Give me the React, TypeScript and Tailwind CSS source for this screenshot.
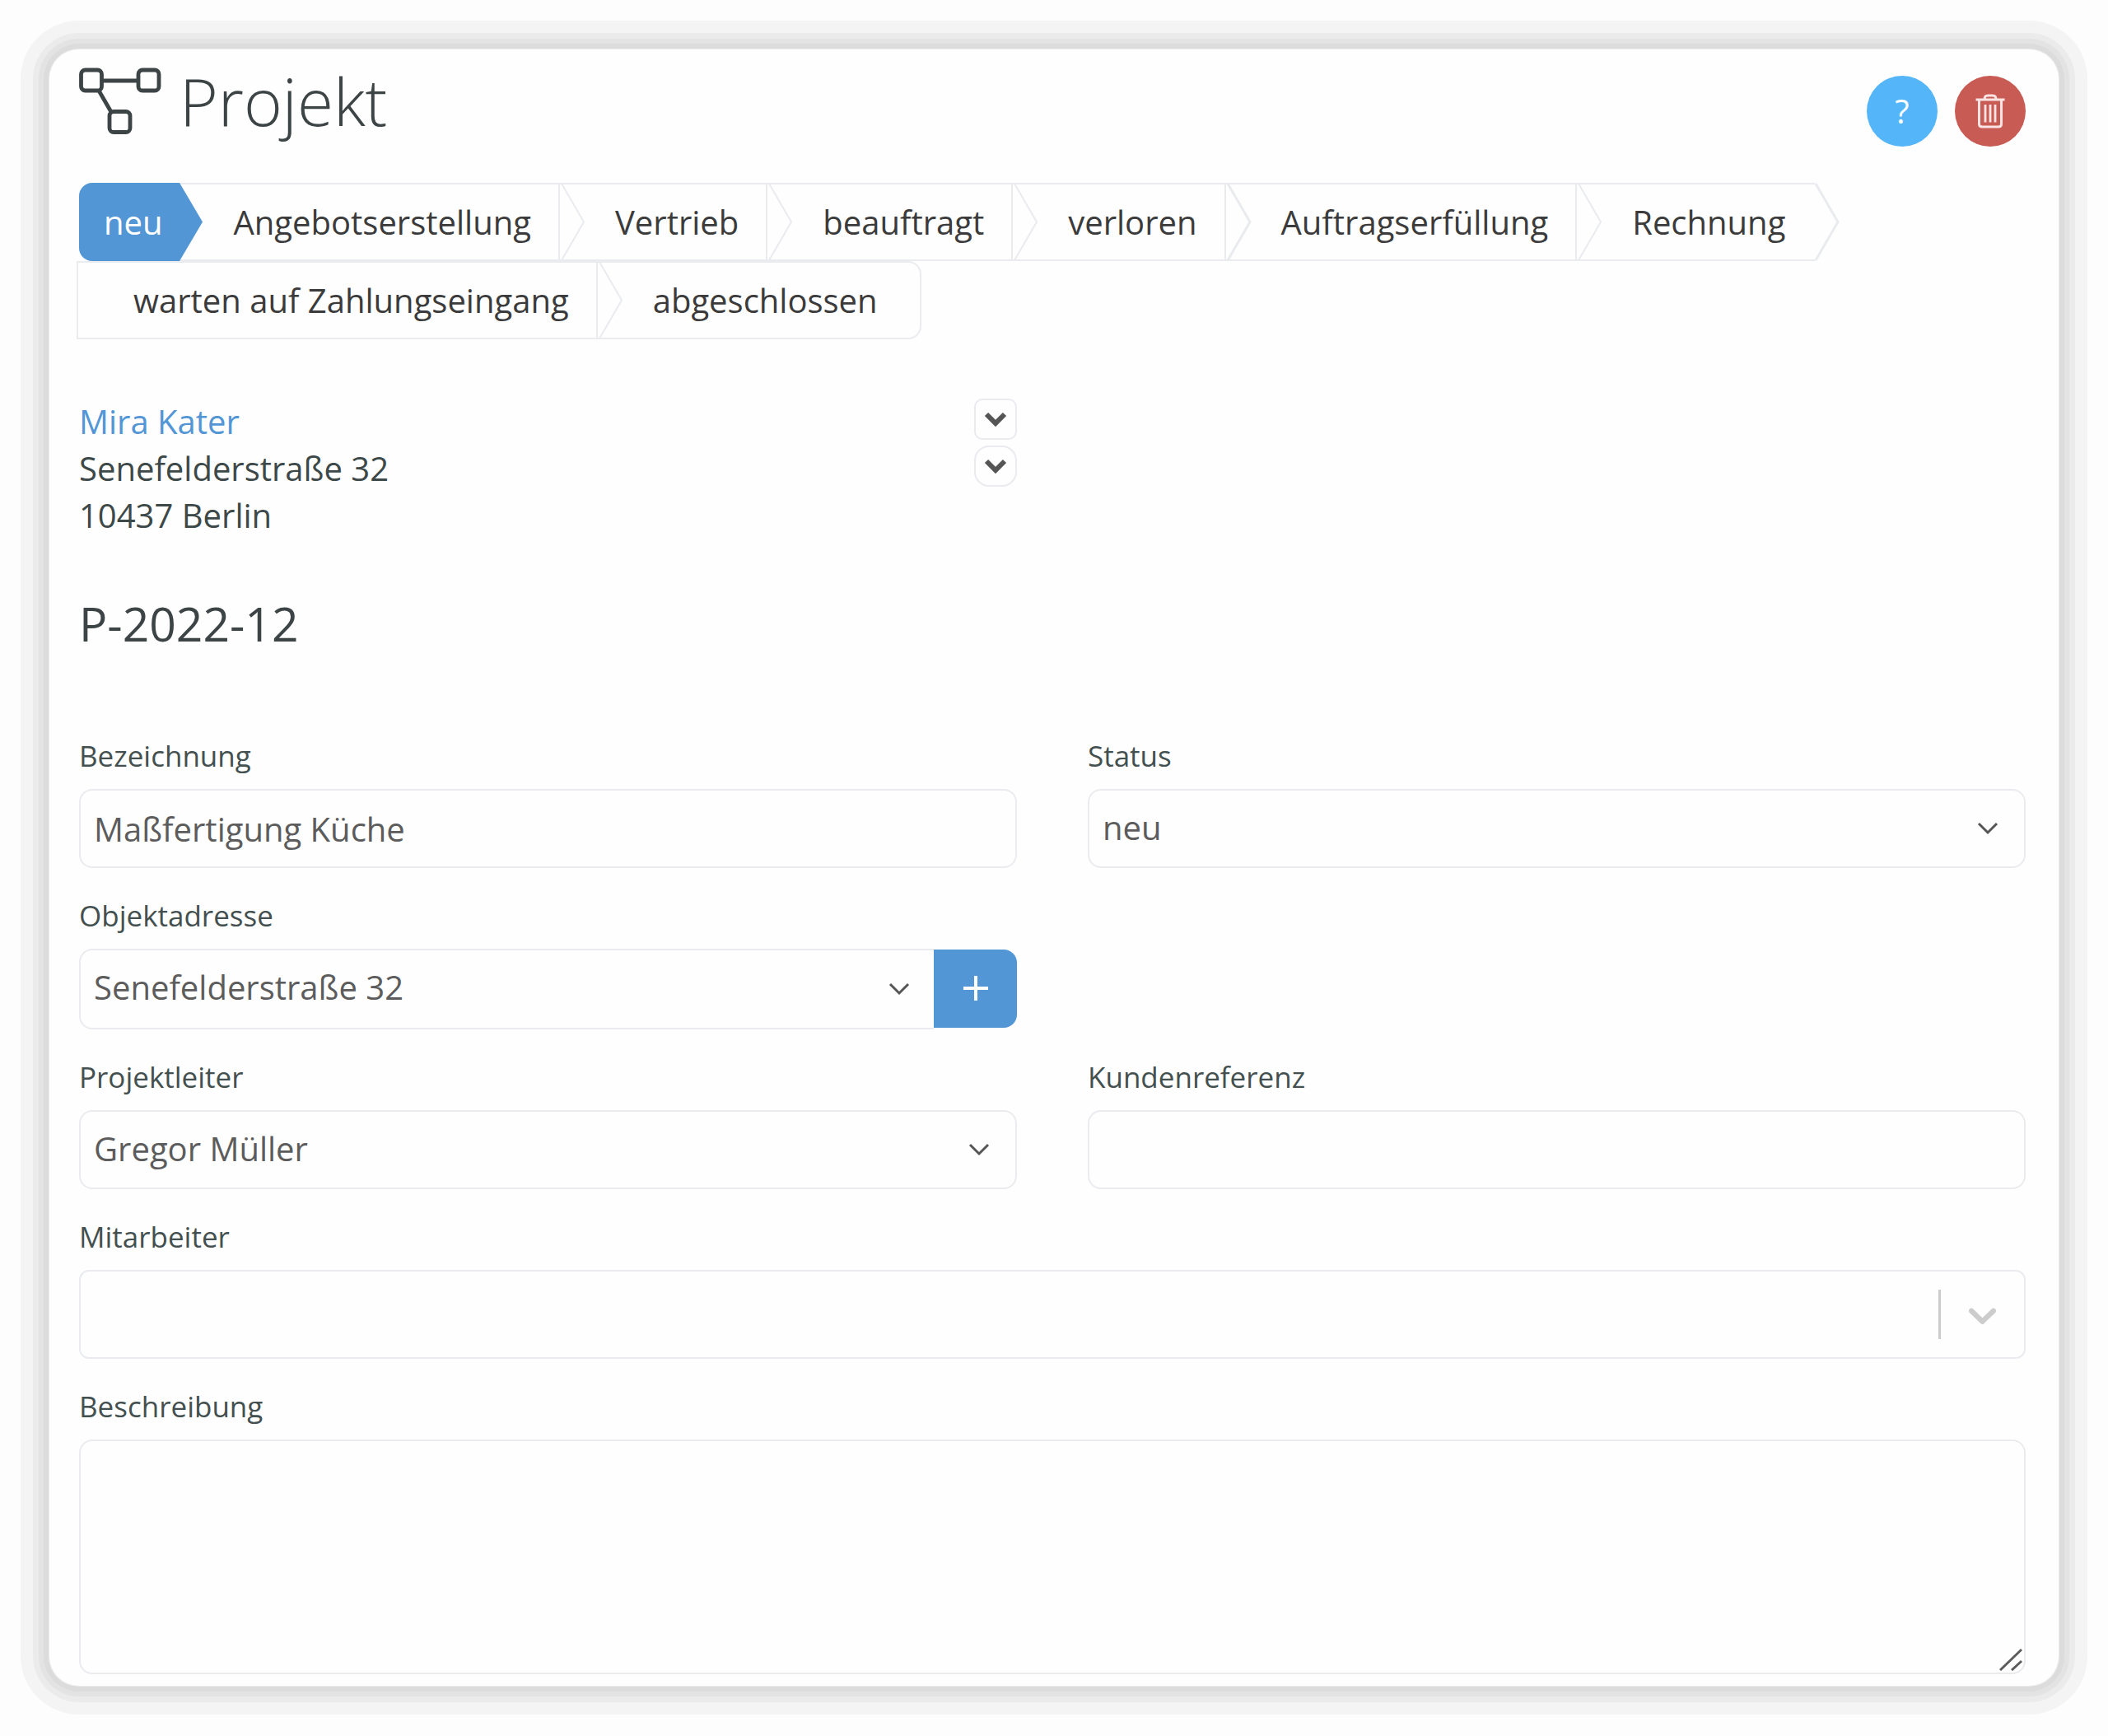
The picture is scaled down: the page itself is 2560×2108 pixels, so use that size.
import type { ReactNode } from 'react';

const steps = [
  'Angebotserstellung',
  'Vertrieb',
  'beauftragt',
  'verloren',
  'Auftragserfüllung',
  'Rechnung',
  'warten auf Zahlungseingang',
];

const control =
  'block w-full rounded-2xl border-2 border-[#eaebee] bg-[#fefefe] px-4 text-[40px] leading-[56px] text-[#5c5c5c] outline-none';

function StepArrow({ bold }: { bold?: boolean }) {
  return (
    <svg
      aria-hidden="true"
      className="pointer-events-none absolute -top-0.5 left-full h-[95px] w-[30px]"
      viewBox="0 0 30 95"
      fill="none"
      stroke="#e9ebef"
      strokeWidth={bold ? 3 : 2}
    >
      <path d="M1 1L28 47.5L1 94" />
    </svg>
  );
}

function ProjectIcon() {
  return (
    <svg aria-hidden="true" className="h-[82px] w-[100px]" viewBox="0 0 100 82" fill="none" stroke="#3d4446" strokeWidth="4.8">
      <rect x="2.5" y="3" width="25" height="25" rx="5" />
      <rect x="72" y="3" width="25" height="25" rx="5" />
      <rect x="37" y="53.500" width="25" height="25" rx="5" />
      <path d="M28 16H72M24 28L39 54" />
    </svg>
  );
}

function TrashIcon() {
  return (
    <svg aria-hidden="true" className="h-[42px] w-9" viewBox="0 0 36 42" fill="none" stroke="#f9e4e3" strokeWidth="3">
      <path d="M0.500 7H35.500M11 6.500C11 3.500 12.500 2 15 2H21C23.500 2 25 3.500 25 6.500" />
      <path d="M4.500 7V36.500C4.500 39 5.500 40 8 40H28C30.500 40 31.500 39 31.500 36.500V7" />
      <path d="M12 13V34.500M18 13V34.500M24 13V34.500" strokeWidth="2.800" />
    </svg>
  );
}

function SmallChevron() {
  return (
    <svg aria-hidden="true" className="h-5 w-7" viewBox="0 0 28 20" fill="none" stroke="#555555" strokeWidth="6">
      <path d="M3 4L14 15L25 4" />
    </svg>
  );
}

function Field({ id, label, className, children }: { id: string; label: string; className?: string; children: ReactNode }) {
  return (
    <div className={className}>
      <label htmlFor={id} className="mb-4 block w-fit text-[35px] leading-[48px] text-[#43504f]">
        {label}
      </label>
      {children}
    </div>
  );
}

function Select({ id, value, joined }: { id: string; value: string; joined?: boolean }) {
  return (
    <div className="relative min-w-0 flex-1">
      <select
        id={id}
        className={`${control} appearance-none ${joined ? 'h-[98px] rounded-r-none border-r-0 pb-1' : 'h-24 pb-0.5'}`}
      >
        <option>{value}</option>
      </select>
      <svg
        aria-hidden="true"
        className={`pointer-events-none absolute top-1/2 h-4 w-7 -translate-y-1/2 ${joined ? 'right-7' : 'right-8'}`}
        viewBox="0 0 28 16"
        fill="none"
        stroke="#555555"
        strokeWidth="3"
      >
        <path d="M3 2L14 13L25 2" />
      </svg>
    </div>
  );
}

export default function App() {
  return (
    <div className="min-h-screen bg-[#fdfdfd] p-[60px] font-['Open_Sans',sans-serif] text-[#3d4848]">
      <main className="rounded-[36px] bg-[#fefefe] pt-[22px] pr-10 pb-3.5 pl-9 shadow-[0_0_0_1px_#ececec,0_0_0_7px_#dcdcdc,0_0_0_13px_#e3e3e3,0_0_0_20px_#ebebeb,0_0_0_35px_#f4f4f4]">
        <header className="flex items-start justify-between">
          <div className="flex items-start gap-[22px]">
            <ProjectIcon />
            <h1 className="text-[80px] leading-[80px] font-light text-[#3d4446]">Projekt</h1>
          </div>
          <div className="flex gap-[21px] pt-2.5">
            <button
              type="button"
              aria-label="Hilfe"
              className="flex size-[86px] items-center justify-center rounded-full bg-[#54b5f9] text-[40px] leading-[56px] text-white"
            >
              ?
            </button>
            <button
              type="button"
              aria-label="Löschen"
              className="flex size-[86px] items-center justify-center rounded-full bg-[#c85b54]"
            >
              <TrashIcon />
            </button>
          </div>
        </header>

        <ol className="mt-11 flex flex-wrap text-[40px] leading-[57px] text-[#3b3b3b]">
          <li className="relative z-10">
            <button type="button" className="h-[95px] rounded-l-2xl bg-[#5396d6] pr-5 pl-[30px] text-white">
              neu
            </button>
            <svg aria-hidden="true" className="absolute top-0 left-full h-[95px] w-7" viewBox="0 0 28 95">
              <path d="M0 0L28 47.500L0 95Z" fill="#5396d6" />
            </svg>
          </li>
          {steps.map((step) => (
            <li key={step} className="relative -ml-[3px] border-y-2 border-l-2 border-[#e9ebef]">
              <button type="button" className="py-[17px] pr-9 pl-[67px]">
                {step}
              </button>
              <StepArrow bold={step === 'verloren' || step === 'Rechnung'} />
            </li>
          ))}
          <li className="-ml-[3px] rounded-r-2xl border-2 border-[#e9ebef]">
            <button type="button" className="py-[17px] pr-[51px] pl-[67px]">
              abgeschlossen
            </button>
          </li>
        </ol>

        <section className="mt-[71px] grid grid-cols-2 gap-x-[86px]">
          <div className="flex items-start justify-between">
            <address className="text-[40px] leading-[57px] not-italic">
              <a href="#kunde" className="text-[#5396d6]">
                Mira Kater
              </a>
              <br />
              Senefelderstraße 32
              <br />
              10437 Berlin
            </address>
            <div className="flex flex-col gap-[7px] pt-px">
              <button
                type="button"
                aria-label="Kunde wählen"
                className="flex h-[50px] w-[52px] items-center justify-center rounded-[10px] border-2 border-[#e9ebef]"
              >
                <SmallChevron />
              </button>
              <button
                type="button"
                aria-label="Adresse wählen"
                className="flex h-[50px] w-[52px] items-center justify-center rounded-[18px] border-2 border-[#e9ebef]"
              >
                <SmallChevron />
              </button>
            </div>
          </div>
        </section>

        <h2 className="mt-[63px] text-[57px] leading-[80px] text-[#3d4446]">P-2022-12</h2>

        <form className="mt-[97px] grid grid-cols-2 gap-x-[86px] gap-y-[34px]">
          <Field id="bezeichnung" label="Bezeichnung">
            <input id="bezeichnung" type="text" defaultValue="Maßfertigung Küche" className={`${control} h-24`} />
          </Field>
          <Field id="status" label="Status">
            <Select id="status" value="neu" />
          </Field>
          <Field id="objektadresse" label="Objektadresse" className="col-start-1">
            <div className="flex items-start">
              <Select id="objektadresse" value="Senefelderstraße 32" joined />
              <button
                type="button"
                aria-label="Adresse hinzufügen"
                className="mt-px flex h-[95px] w-[101px] items-center justify-center rounded-r-2xl bg-[#5396d6]"
              >
                <svg aria-hidden="true" className="size-8" viewBox="0 0 32 32" stroke="#ffffff" strokeWidth="4">
                  <path d="M1 15H31M16 0V30" />
                </svg>
              </button>
            </div>
          </Field>
          <Field id="projektleiter" label="Projektleiter" className="col-start-1">
            <Select id="projektleiter" value="Gregor Müller" />
          </Field>
          <Field id="kundenreferenz" label="Kundenreferenz">
            <input id="kundenreferenz" type="text" className={`${control} h-24`} />
          </Field>
          <Field id="mitarbeiter" label="Mitarbeiter" className="col-span-2">
            <div className="flex h-[108px] items-stretch rounded-xl border-2 border-[#e9ebef]">
              <input
                id="mitarbeiter"
                type="text"
                className="min-w-0 flex-1 bg-transparent px-4 text-[40px] leading-[56px] text-[#5c5c5c] outline-none"
              />
              <span className="my-[22px] w-[3px] bg-[#cccccc]" />
              <button type="button" aria-label="Mitarbeiter wählen" className="px-[22px] text-[#cccccc]">
                <svg aria-hidden="true" className="size-[57px]" viewBox="0 0 20 20" fill="currentColor">
                  <path d="M4.516 7.548c0.436-0.446 1.043-0.481 1.576 0l3.908 3.747 3.908-3.747c0.533-0.481 1.141-0.446 1.574 0 0.436 0.445 0.408 1.197 0 1.615-0.406 0.418-4.695 4.502-4.695 4.502-0.217 0.223-0.502 0.335-0.787 0.335s-0.570-0.112-0.789-0.335c0 0-4.287-4.084-4.695-4.502s-0.436-1.170 0-1.615z" />
                </svg>
              </button>
            </div>
          </Field>
          <Field id="beschreibung" label="Beschreibung" className="col-span-2">
            <div className="relative">
              <textarea id="beschreibung" className={`${control} h-[285px] resize-none py-4`} />
              <svg
                aria-hidden="true"
                className="pointer-events-none absolute right-1 bottom-1 size-7"
                viewBox="0 0 28 28"
                stroke="#5c5c5c"
                strokeWidth="3"
              >
                <path d="M1 27L27 2M15 27L27 16" />
              </svg>
            </div>
          </Field>
        </form>
      </main>
    </div>
  );
}
